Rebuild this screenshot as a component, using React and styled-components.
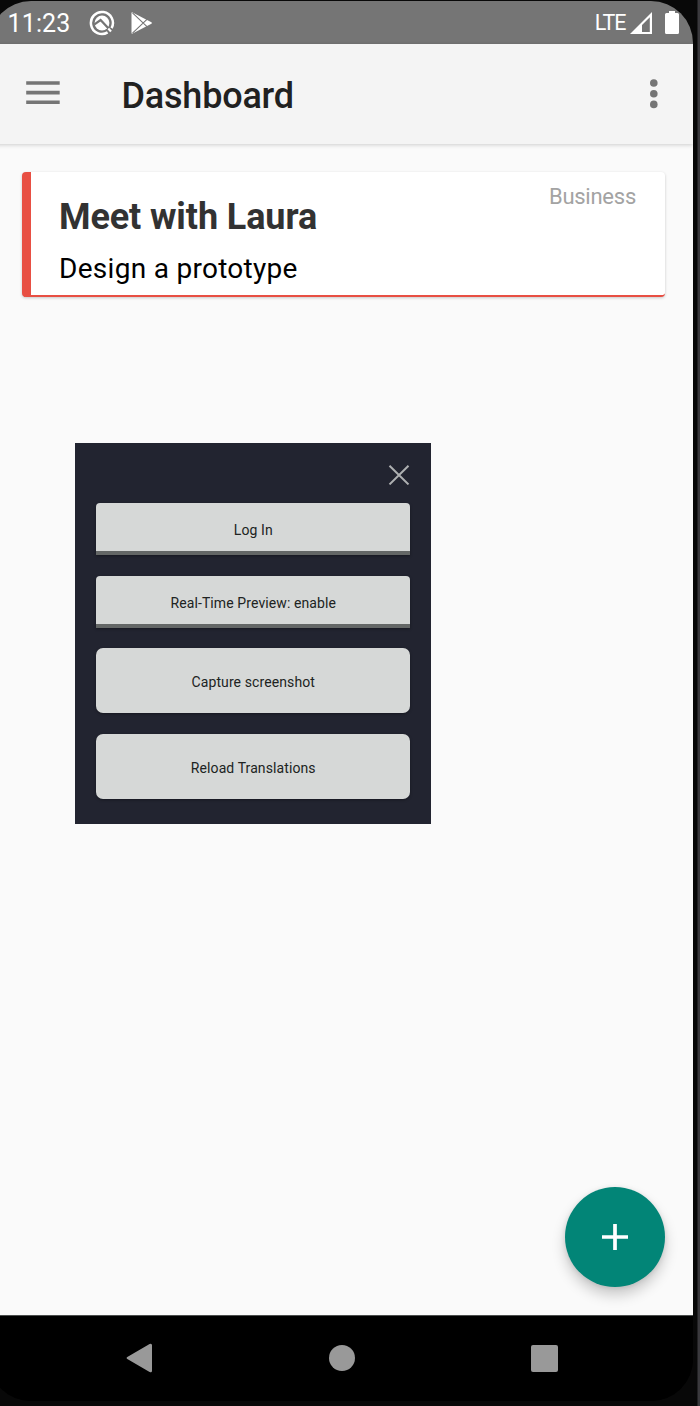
import React from "react";
import styled, { createGlobalStyle } from "styled-components";

const GlobalStyle = createGlobalStyle`
  * { box-sizing: border-box; }
  body { margin: 0; background: #060606; font-family: Roboto, "Liberation Sans", sans-serif; }
  button { font-family: inherit; border: 0; padding: 0; background: none; }
  svg { display: block; flex: none; }
`;

const Frame = styled.div`
  width: 700px;
  height: 1406px;
  padding-top: 1px;
  overflow: hidden;
  background: linear-gradient(90deg, #080808 0 697px, #3a393d 698px 700px);
`;

/* The display's left edge runs past the frame, so its rounded corners are cut there. */
const Screen = styled.div`
  width: 704px;
  height: 1400px;
  margin-left: -11px;
  display: flex;
  flex-direction: column;
  overflow: hidden;
  background: #000;
  border-radius: 42px;
`;

const StatusBar = styled.header`
  height: 43px;
  flex: none;
  display: flex;
  align-items: center;
  padding: 0 14px 0 18.5px;
  background: #757575;
  color: #fff;
`;

const Clock = styled.span`
  width: 81.5px;
  font-size: 25px;
  line-height: 43px;
  letter-spacing: 0.15px;
  white-space: nowrap;
  padding-top: 1px;
`;

const StatusIcons = styled.div`
  display: flex;
  align-items: center;
  gap: 16px;
  flex: 1;
`;

const Network = styled.span`
  font-size: 21.5px;
  letter-spacing: -1px;
  margin-right: 4.5px;
`;

const Signals = styled.div`
  display: flex;
  align-items: center;
  gap: 13px;
`;

const AppBar = styled.div`
  height: 100px;
  flex: none;
  display: flex;
  align-items: center;
  padding: 0 35px 0 37px;
  background: #f4f4f4;
  box-shadow: 0 1px 4px rgba(0, 0, 0, 0.18);
  z-index: 1;
`;

const MenuButton = styled.button`
  margin-top: -3px;
`;

const Title = styled.h1`
  flex: 1;
  margin: 3px 0 0 61.5px;
  font-size: 36px;
  font-weight: 500;
  line-height: 42px;
  letter-spacing: -0.2px;
  color: #212121;
`;

const MoreButton = styled.button`
  margin-right: 0.5px;
`;

const Content = styled.main`
  flex: 1;
  display: flex;
  flex-direction: column;
  padding: 28px 28.5px 28px 32.5px;
  background: #fafafa;
`;

const TaskCard = styled.article`
  height: 125px;
  display: flex;
  justify-content: space-between;
  padding: 0 28.5px 0 28.5px;
  background: #fff;
  border-left: 9px solid #e84f43;
  border-bottom: 2px solid #e84f43;
  border-radius: 4px;
  box-shadow: 0 1px 3px rgba(0, 0, 0, 0.2);
`;

const TaskTitle = styled.h2`
  margin: 24px 0 0;
  font-size: 36px;
  line-height: 42px;
  font-weight: 700;
  letter-spacing: -0.1px;
  color: #323232;
`;

const TaskText = styled.p`
  margin: 14px 0 0;
  font-size: 28px;
  line-height: 34px;
  letter-spacing: 0.29px;
  color: #000;
`;

const Category = styled.span`
  margin-top: 12px;
  font-size: 22px;
  line-height: 26px;
  letter-spacing: -0.25px;
  color: #a3a3a3;
`;

const Panel = styled.section`
  width: 356.5px;
  height: 380.5px;
  margin: 146px 0 0 53px;
  padding: 22px 21px 0;
  display: flex;
  flex-direction: column;
  background: #222430;
`;

const CloseButton = styled.button`
  align-self: flex-end;
  height: 20px;
  margin-bottom: 18px;
`;

const PanelButton = styled.button`
  height: ${(p) => (p.$tall ? 65 : 52)}px;
  flex: none;
  margin-bottom: 20.7px;
  padding-top: ${(p) => (p.$tall ? 2 : 6)}px;
  padding-left: 1px;
  background: #d6d8d7;
  color: #202322;
  font-size: 14px;
  letter-spacing: 0.1px;
  border-bottom: ${(p) => (p.$tall ? "0" : "4px solid #646766")};
  border-radius: ${(p) => (p.$tall ? "7px" : "4px 4px 0 0")};
  box-shadow: 0 1px 3px rgba(0, 0, 0, 0.35);
`;

const Fab = styled.button`
  width: 100px;
  height: 100px;
  margin-top: auto;
  align-self: flex-end;
  display: flex;
  align-items: center;
  justify-content: center;
  border-radius: 50%;
  background: #028577;
  box-shadow: 0 8px 14px rgba(0, 0, 0, 0.2), 0 1px 5px rgba(0, 0, 0, 0.1);
`;

const NavBar = styled.nav`
  height: 86px;
  flex: none;
  display: flex;
  align-items: center;
  justify-content: space-between;
  padding: 0 135px 1px 137px;
  border-top: 1px solid #4a4d4c;
  background: #000;
`;

const buttons = [
  { label: "Log In" },
  { label: "Real-Time Preview: enable" },
  { label: "Capture screenshot", tall: true },
  { label: "Reload Translations", tall: true },
];

const AssistantIcon = () => (
  <svg width="26" height="26" viewBox="0 0 26 26" fill="none">
    <path d="M18.6 22.4A11 11 0 1 1 22.6 18.2" stroke="#fff" strokeWidth="2.5" />
    <circle cx="13" cy="13" r="7.4" fill="#fff" />
    <path d="M5.5 14.4 11.6 10 20.5 19.6" stroke="#757575" strokeWidth="2.2" />
    <path d="m19.3 18.6 2.7 2.9" stroke="#fff" strokeWidth="2.2" />
  </svg>
);

const PlayIcon = () => (
  <svg width="22" height="22" viewBox="0 0 22 22" fill="#fff">
    <path d="M.5 1.2Q.5 0 1.6.5L20.4 10.2q1.3.8 0 1.6L1.6 21.5Q.5 22 .5 20.8Z" />
    <path d="M1.5 .8 16.5 15.2M1.5 21.2 16.5 6.8" stroke="#757575" strokeWidth="1.1" />
  </svg>
);

export default function App() {
  return (
    <>
      <GlobalStyle />
      <Frame>
        <Screen>
          <StatusBar>
            <Clock>11:23</Clock>
            <StatusIcons>
              <AssistantIcon />
              <PlayIcon />
            </StatusIcons>
            <Network>LTE</Network>
            <Signals>
              <svg width="22" height="22" viewBox="0 0 22 22" fill="#fff">
                <path fillRule="evenodd" d="M22 0V22H0ZM19.8 5.3 12 13V20H19.8Z" />
              </svg>
              <svg width="14" height="23" viewBox="0 0 14 23" fill="#fff">
                <path d="M4 0h6v2h2.5Q14 2 14 3.5v18q0 1.5-1.5 1.5h-11Q0 23 0 21.5v-18Q0 2 1.5 2H4Z" />
              </svg>
            </Signals>
          </StatusBar>
          <AppBar>
            <MenuButton aria-label="Menu">
              <svg width="34" height="24" viewBox="0 0 34 24" stroke="#757575" strokeWidth="3.6">
                <path d="M.2 2H33.7M.2 11.6H33.7M.2 21.2H33.7" />
              </svg>
            </MenuButton>
            <Title>Dashboard</Title>
            <MoreButton aria-label="More">
              <svg width="8" height="30" viewBox="0 0 8 30" fill="#757575">
                <circle cx="3.8" cy="4" r="3.8" />
                <circle cx="3.8" cy="14.7" r="3.8" />
                <circle cx="3.8" cy="25.4" r="3.8" />
              </svg>
            </MoreButton>
          </AppBar>
          <Content>
            <TaskCard>
              <div>
                <TaskTitle>Meet with Laura</TaskTitle>
                <TaskText>Design a prototype</TaskText>
              </div>
              <Category>Business</Category>
            </TaskCard>
            <Panel>
              <CloseButton aria-label="Close">
                <svg width="22" height="20" viewBox="0 0 22 20" stroke="#aeb0b1" strokeWidth="2">
                  <path d="m1.5.8 19 18.6M20.5.8l-19 18.6" />
                </svg>
              </CloseButton>
              {buttons.map((b) => (
                <PanelButton key={b.label} $tall={b.tall}>
                  {b.label}
                </PanelButton>
              ))}
            </Panel>
            <Fab aria-label="Add">
              <svg width="26" height="26" viewBox="0 0 26 26" stroke="#fff" strokeWidth="3.7">
                <path d="M13 0v26M0 13h26" />
              </svg>
            </Fab>
          </Content>
          <NavBar>
            <svg width="26" height="30" viewBox="0 0 26 30" fill="#999">
              <path d="M1.3 14.1 23.6.9Q26 0 26 2.2v25.6Q26 30 23.6 29L1.3 15.9q-1.4-.9 0-1.8Z" />
            </svg>
            <svg width="27" height="26" viewBox="0 0 27 26" fill="#999">
              <circle cx="14" cy="13" r="13" />
            </svg>
            <svg width="27" height="27" viewBox="0 0 27 27" fill="#999">
              <rect width="27" height="27" rx="2" />
            </svg>
          </NavBar>
        </Screen>
      </Frame>
    </>
  );
}
